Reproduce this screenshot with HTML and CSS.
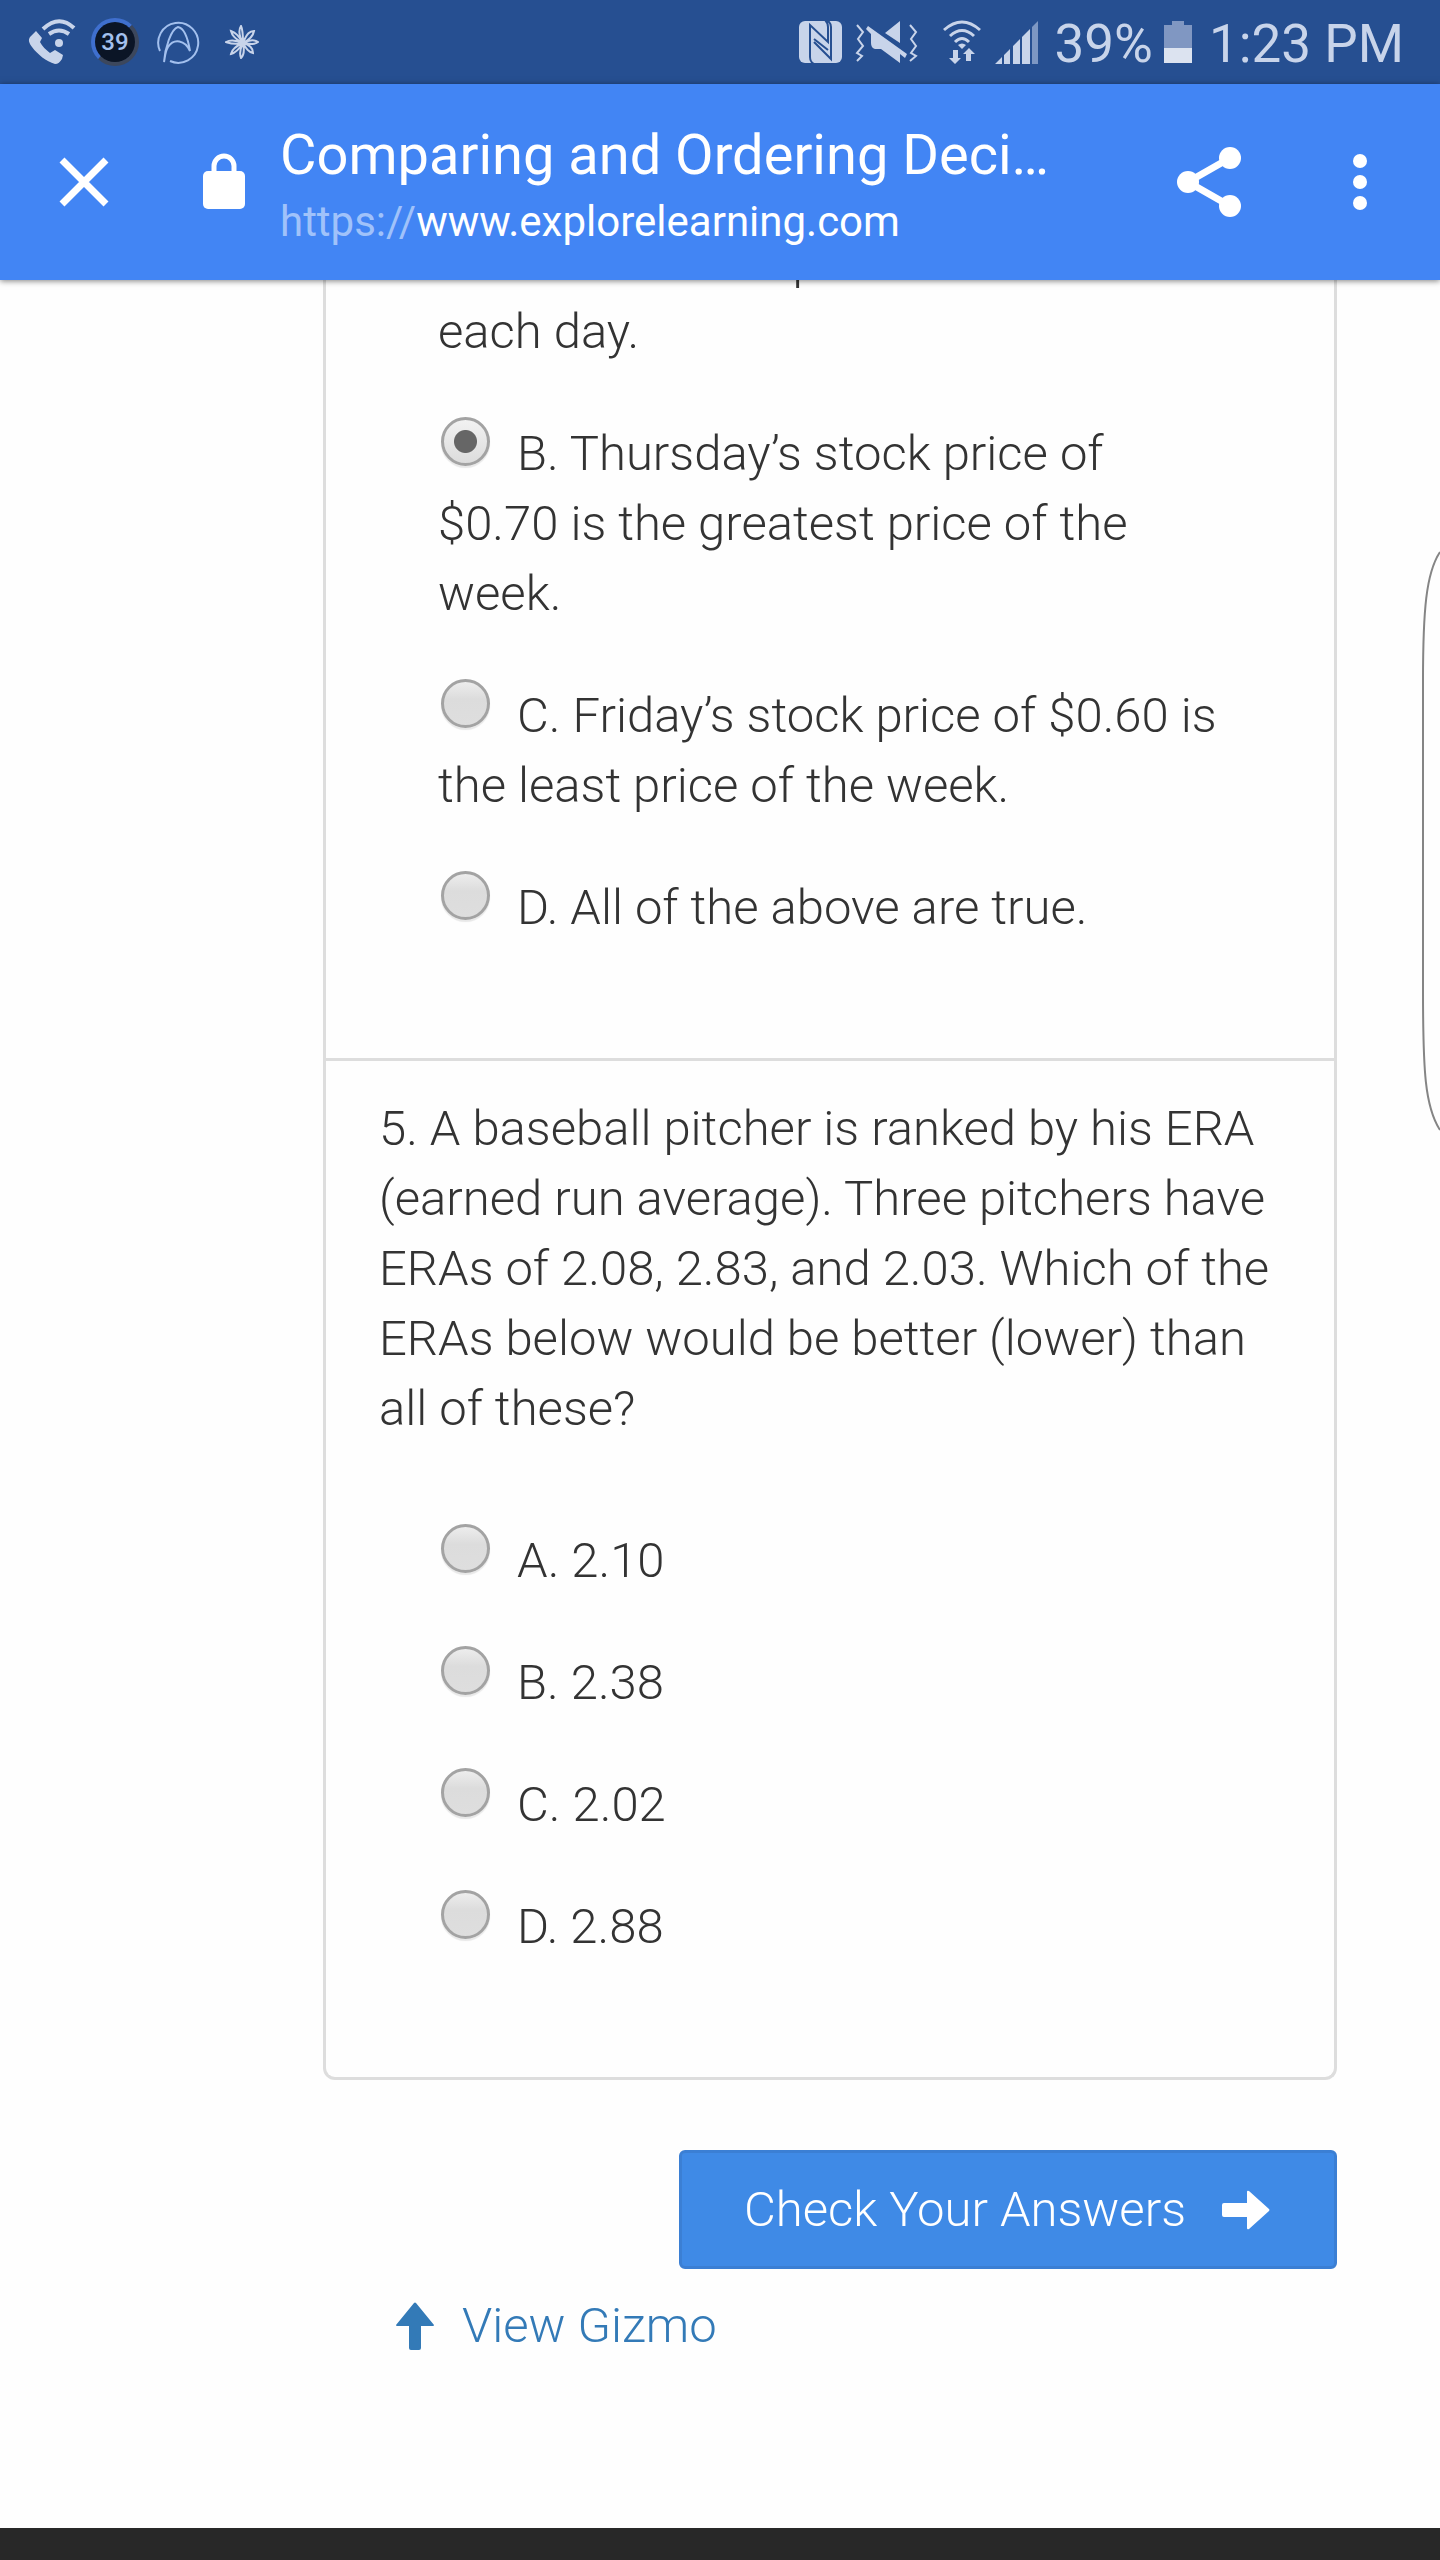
FILE: index.html
```html
<!DOCTYPE html>
<html lang="en">
<head>
<meta charset="utf-8">
<meta name="viewport" content="width=device-width, initial-scale=1">
<title>Comparing and Ordering Decimals</title>
<link rel="stylesheet" href="styles.css">
</head>
<body>
<div class="status">
  <div class="status-left">
    <svg class="icon-call" width="48" height="46" viewBox="0 0 48 46" aria-hidden="true">
      <path d="M8 12 L2 18 C0 21 1 24 4 28 C10 36 18 42 27 45 C30 45 32 43 34 40 L35 36 L27 31 L22 34 C18 31 14 27 12 23 L14 19 Z" fill="currentColor"/>
      <circle cx="31" cy="24" r="4" fill="currentColor"/>
      <path d="M21 15 Q31 8 41 15 M15 10 Q31 -5 46 9" fill="none" stroke="currentColor" stroke-width="4"/>
    </svg>
    <div class="level">39</div>
    <svg width="44" height="44" viewBox="0 0 44 44" fill="none" stroke="#a3c0ee" stroke-width="2" aria-hidden="true">
      <path d="M4 31 A20 20 0 1 1 14 41"/>
      <path d="M8 42 C9 28 15 9 22 7 C28 8 32 19 34 31 C29 20 18 18 12 27 C9 32 9 37 8 42 Z"/>
    </svg>
    <svg class="icon-flower" width="34" height="34" viewBox="0 0 34 34" fill="none" stroke="currentColor" stroke-width="2" aria-hidden="true">
      <path d="M18 18 C13 9 14 4 16 1 C18 5 18 10 18 18 C22 8 25 6 29 6 C28 12 24 15 18 18 C26 14 30 15 33 17 C29 20 25 19 18 18 C26 20 28 24 28 28 C23 27 21 23 18 18 C20 27 18 31 16 33 C14 28 15 24 18 18 C13 26 10 28 6 29 C7 24 11 21 18 18 C9 20 4 18 1 17 C6 14 11 15 18 18 C9 13 7 10 6 6 C12 8 14 12 18 18"/>
    </svg>
  </div>
  <div class="status-right">
    <svg width="43" height="42" viewBox="0 0 43 42" aria-hidden="true">
      <rect width="43" height="42" rx="6" fill="currentColor"/>
      <path d="M15 43 Q11 41 11 36 V4 L29 21 V6 Q29 2 26 -1 M28 -1 Q32 2 32 6 V38 L15 21 M15 18 L29 29" fill="none" stroke="#264f91" stroke-width="2"/>
    </svg>
    <svg class="icon-mute" width="63" height="42" viewBox="0 0 63 42" aria-hidden="true">
      <path d="M2 4 L8 11 L3 18 L8 25 L2 32 L7 35 L2 40 M55 4 L61 11 L56 18 L61 25 L56 32 L61 35 L55 40" fill="none" stroke="currentColor" stroke-width="2"/>
      <path d="M13 5 L52 33 L50 37 L45 33 V42 L26 28 H20 Q16 27 16 22 V13 L11 8 Z M30 12 L45 0 V22 Z" fill="currentColor"/>
    </svg>
    <svg class="icon-wifi" width="38" height="44" viewBox="0 0 38 44" aria-hidden="true">
      <path d="M1 10 Q19 -6 37 10 M7 16 Q19 5 31 16 M12 22 Q19 15 26 22" fill="none" stroke="currentColor" stroke-width="3"/>
      <path d="M15 25 Q19 22 23 25 L19 29 Z M10 30 H15 V38 H18 L12 44 L6 38 H10 Z M26 28 L32 34 H28 V41 H23 V34 H20 Z" fill="currentColor"/>
    </svg>
    <svg class="icon-signal" width="43" height="43" viewBox="0 0 43 43" aria-hidden="true">
      <path d="M0 43 L7 36 V43 Z M9 34 L15 28 V43 H9 Z M18 25 L25 18 V43 H18 Z M27 16 L35 8 V43 H27 Z" fill="currentColor"/>
      <path d="M37 6 L43 0 V43 H37 Z" fill="#7d97c3"/>
    </svg>
    <span class="percent">39%</span>
    <svg class="icon-battery" width="28" height="42" viewBox="0 0 28 42" aria-hidden="true">
      <path d="M8 0 H20 V4 H28 V27 H0 V4 H8 Z" fill="#8097c2"/>
      <path d="M0 27 H28 V42 H0 Z" fill="#dce3f0"/>
    </svg>
    <time class="clock">1:23 PM</time>
  </div>
</div>

<header class="toolbar">
  <button class="tool close" type="button" aria-label="Close">
    <svg width="50" height="50" viewBox="0 0 50 50"><path d="M3 3 L47 47 M47 3 L3 47" stroke="currentColor" stroke-width="7"/></svg>
  </button>
  <svg class="lock" width="42" height="56" viewBox="0 0 42 56" aria-hidden="true">
    <path d="M11 22 V13 A10 10 0 0 1 31 13 V22" fill="none" stroke="currentColor" stroke-width="5"/>
    <rect y="18" width="42" height="38" rx="5" fill="currentColor"/>
  </svg>
  <div class="page-info">
    <h1 class="page-title">Comparing and Ordering Deci…</h1>
    <div class="page-url"><span class="scheme">https://</span>www.explorelearning.com</div>
  </div>
  <button class="tool share" type="button" aria-label="Share">
    <svg width="64" height="70" viewBox="0 0 64 70"><path d="M53 11 L11 35 L53 59" fill="none" stroke="currentColor" stroke-width="7"/><g fill="currentColor"><circle cx="53" cy="11" r="11"/><circle cx="11" cy="35" r="11"/><circle cx="53" cy="59" r="11"/></g></svg>
  </button>
  <button class="tool more" type="button" aria-label="More options">
    <svg width="16" height="58" viewBox="0 0 16 58" fill="currentColor"><circle cx="8" cy="8" r="7"/><circle cx="8" cy="29" r="7"/><circle cx="8" cy="50" r="7"/></svg>
  </button>
</header>

<main class="page">
  <form class="quiz">
    <div class="card">
      <section class="question scrolled">
        <div class="answers">
          <label class="answer"><input type="radio" name="q4">A. The stock price increased each&nbsp;day.</label>
          <label class="answer"><input type="radio" name="q4" checked>B. Thursday’s stock price of $0.70 is the greatest price of the week.</label>
          <label class="answer"><input type="radio" name="q4">C. Friday’s stock price of $0.60 is the least price of the week.</label>
          <label class="answer"><input type="radio" name="q4">D. All of the above are true.</label>
        </div>
      </section>
      <section class="question">
        <p class="prompt">5. A baseball pitcher is ranked by his ERA (earned run average). Three pitchers have ERAs of 2.08, 2.83, and 2.03. Which of the ERAs below would be better (lower) than all of these?</p>
        <div class="answers">
          <label class="answer"><input type="radio" name="q5">A. 2.10</label>
          <label class="answer"><input type="radio" name="q5">B. 2.38</label>
          <label class="answer"><input type="radio" name="q5">C. 2.02</label>
          <label class="answer"><input type="radio" name="q5">D. 2.88</label>
        </div>
      </section>
    </div>
    <button class="check" type="submit">Check Your Answers
      <svg width="48" height="40" viewBox="0 0 48 40" aria-hidden="true"><path d="M2 13 H25 V2 Q25 0 27 1 L47 19 Q48 20 47 21 L27 39 Q25 40 25 38 V27 H2 Q0 27 0 25 V15 Q0 13 2 13 Z" fill="currentColor"/></svg>
    </button>
  </form>
  <a class="gizmo" href="#gizmo">
    <svg width="38" height="48" viewBox="0 0 38 48" aria-hidden="true"><path d="M18 1 Q19 0 20 1 L38 23 Q38 24 37 24 H25 V46 Q25 48 23 48 H15 Q13 48 13 46 V24 H1 Q0 24 0 23 Z" fill="currentColor"/></svg>
    View Gizmo
  </a>
  <svg class="edge" width="18" height="580" viewBox="0 0 18 580" fill="none" aria-hidden="true"><path d="M18 1 C4 22 1 60 1 130 V440 C1 520 3 556 18 579" stroke="#858585" stroke-width="2"/></svg>
</main>
<div class="base"></div>
</body>
</html>
```

FILE: styles.css
```css
* { box-sizing: border-box; }

body {
  margin: 0;
  min-height: 100vh;
  display: flex;
  flex-direction: column;
  background: #fefefe;
  color: #333;
  font-family: Roboto, "Liberation Sans", sans-serif;
  font-size: 49px;
  font-weight: 300;
  line-height: 70px;
}

svg { display: block; flex: none; }

/* Status bar */
.status {
  height: 84px;
  padding: 0 36px 0 28px;
  display: flex;
  justify-content: space-between;
  align-items: center;
  background: #264f91;
  color: #c8d4ea;
  font-weight: 400;
}
.status-left, .status-right { display: flex; align-items: center; }
.level {
  width: 48px;
  height: 48px;
  margin: 0 17px 0 15px;
  border: 4px solid #3c475c;
  border-top-color: #3f6fce;
  border-left-color: #3f6fce;
  border-radius: 50%;
  background: #0b1526;
  color: #a3c0ee;
  font-size: 24px;
  font-weight: 500;
  line-height: 41px;
  text-align: center;
}
.icon-flower { margin-left: 25px; }
.icon-mute { margin-left: 13px; }
.icon-wifi { margin-left: 25px; }
.icon-signal { margin-left: 14px; }
.percent, .clock { padding-top: 4px; font-size: 53px; line-height: 80px; }
.percent { margin-left: 17px; }
.icon-battery { margin: 0 17px 0 11px; }

/* Browser toolbar */
.toolbar {
  position: relative;
  z-index: 1;
  height: 196px;
  padding: 0 72px 0 59px;
  display: flex;
  align-items: center;
  background: #4285f4;
  color: #fff;
  box-shadow: 0 1px 6px rgba(0, 0, 0, 0.5);
}
.tool {
  padding: 0;
  border: 0;
  background: none;
  color: inherit;
}
.lock { margin: 0 35px 2px 94px; }
.page-info { flex: 1; min-width: 0; padding-top: 14px; }
.page-title {
  margin: 0;
  font-size: 56px;
  font-weight: 400;
  line-height: 66px;
  white-space: nowrap;
}
.page-url {
  font-size: 42px;
  font-weight: 400;
  line-height: 68px;
}
.scheme { color: #a0c2fa; }
.more { margin-left: 111px; }

/* Page content */
.page {
  position: relative;
  flex: 1;
  overflow: hidden;
  padding: 0 103px 0 323px;
}
.quiz { display: flex; flex-direction: column; }
.card {
  border: 3px solid #ddd;
  border-top: 0;
  border-radius: 0 0 12px 12px;
}
.question { padding: 33px 50px 115px 53px; }
.question + .question { border-top: 3px solid #ddd; }
.scrolled { margin-top: -88px; }
.prompt { margin: 0 0 80px; }
.answers {
  display: flex;
  flex-direction: column;
  gap: 50px;
  padding: 0 59px;
}
.answer { display: block; }
.answer input {
  appearance: none;
  width: 49px;
  height: 49px;
  margin: 0 27px 0 3px;
  vertical-align: 4px;
  border: 3px solid #a3a3a3;
  border-radius: 50%;
  background: linear-gradient(#ededed, #dcdcdc 40%, #dedede);
  box-shadow: 0 2px 1px #e8e8e8;
}
.answer input:checked {
  background: radial-gradient(circle, #666 11px, transparent 12px), linear-gradient(#f2f2f2, #dcdcdc);
}

.check {
  align-self: flex-end;
  display: flex;
  align-items: center;
  gap: 36px;
  height: 119px;
  margin-top: 70px;
  padding: 0 64px 0 62px;
  border: 3px solid #3b7fd4;
  border-radius: 6px;
  background: #3f8ae6;
  color: #fff;
  font: inherit;
}
.gizmo {
  display: inline-flex;
  align-items: center;
  gap: 28px;
  margin: 22px 0 0 73px;
  color: #337ab7;
  text-decoration: none;
}

/* Handle of the edge panel, over the page */
.edge { position: absolute; right: 0; top: 271px; }

.base { height: 32px; background: #282828; }
```
